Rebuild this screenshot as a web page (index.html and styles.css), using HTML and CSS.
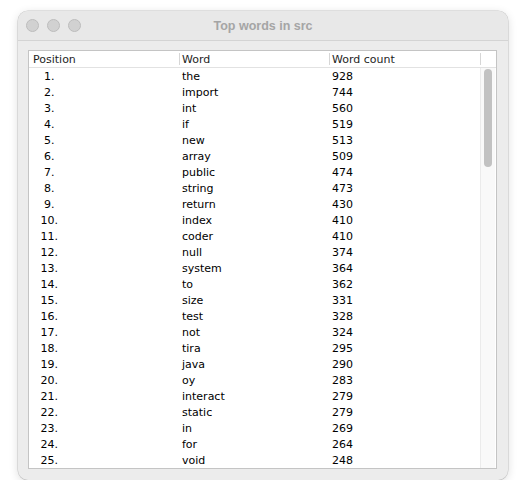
FILE: index.html
```html
<!DOCTYPE html>
<html>
<head>
<meta charset="utf-8">
<link rel="stylesheet" href="styles.css">
</head>
<body>
<div class="window">
  <div class="titlebar">
    <div class="lights"><span class="light"></span><span class="light"></span><span class="light"></span></div>
    <div class="title">Top words in src</div>
    <div></div>
  </div>
  <div class="content">
    <div class="table">
      <div class="header">
        <div class="hcell first">Position</div>
        <div class="hcell">Word</div>
        <div class="hcell">Word count</div>
        <div class="hcell corner"></div>
      </div>
      <div class="bodywrap">
        <div class="rows" id="rows">
          <div class="row"><span class="pos">  1.</span><span class="word">the</span><span class="count">928</span></div>
          <div class="row"><span class="pos">  2.</span><span class="word">import</span><span class="count">744</span></div>
          <div class="row"><span class="pos">  3.</span><span class="word">int</span><span class="count">560</span></div>
          <div class="row"><span class="pos">  4.</span><span class="word">if</span><span class="count">519</span></div>
          <div class="row"><span class="pos">  5.</span><span class="word">new</span><span class="count">513</span></div>
          <div class="row"><span class="pos">  6.</span><span class="word">array</span><span class="count">509</span></div>
          <div class="row"><span class="pos">  7.</span><span class="word">public</span><span class="count">474</span></div>
          <div class="row"><span class="pos">  8.</span><span class="word">string</span><span class="count">473</span></div>
          <div class="row"><span class="pos">  9.</span><span class="word">return</span><span class="count">430</span></div>
          <div class="row"><span class="pos"> 10.</span><span class="word">index</span><span class="count">410</span></div>
          <div class="row"><span class="pos"> 11.</span><span class="word">coder</span><span class="count">410</span></div>
          <div class="row"><span class="pos"> 12.</span><span class="word">null</span><span class="count">374</span></div>
          <div class="row"><span class="pos"> 13.</span><span class="word">system</span><span class="count">364</span></div>
          <div class="row"><span class="pos"> 14.</span><span class="word">to</span><span class="count">362</span></div>
          <div class="row"><span class="pos"> 15.</span><span class="word">size</span><span class="count">331</span></div>
          <div class="row"><span class="pos"> 16.</span><span class="word">test</span><span class="count">328</span></div>
          <div class="row"><span class="pos"> 17.</span><span class="word">not</span><span class="count">324</span></div>
          <div class="row"><span class="pos"> 18.</span><span class="word">tira</span><span class="count">295</span></div>
          <div class="row"><span class="pos"> 19.</span><span class="word">java</span><span class="count">290</span></div>
          <div class="row"><span class="pos"> 20.</span><span class="word">oy</span><span class="count">283</span></div>
          <div class="row"><span class="pos"> 21.</span><span class="word">interact</span><span class="count">279</span></div>
          <div class="row"><span class="pos"> 22.</span><span class="word">static</span><span class="count">279</span></div>
          <div class="row"><span class="pos"> 23.</span><span class="word">in</span><span class="count">269</span></div>
          <div class="row"><span class="pos"> 24.</span><span class="word">for</span><span class="count">264</span></div>
          <div class="row"><span class="pos"> 25.</span><span class="word">void</span><span class="count">248</span></div>
        </div>
        <div class="scrolltrack"><div class="thumb"></div></div>
      </div>
    </div>
  </div>
</div>
</body>
</html>
```
FILE: styles.css
```css
html, body {
  margin: 0;
  padding: 0;
  background: #ffffff;
}
body {
  padding: 11px 0 0 18px;
  font-family: "DejaVu Sans", "Liberation Sans", sans-serif;
}
.window {
  width: 490px;
  height: 469px;
  box-sizing: border-box;
  background: #ececec;
  border-radius: 10px;
  box-shadow: 0 0 0 0.5px rgba(0,0,0,0.18), 0 2px 10px rgba(0,0,0,0.14);
  overflow: hidden;
  display: flex;
  flex-direction: column;
}
.titlebar {
  height: 29px;
  flex: 0 0 29px;
  background: #e8e8e8;
  border-bottom: 1px solid #d4d4d4;
  display: grid;
  grid-template-columns: 1fr auto 1fr;
  align-items: center;
}
.lights {
  display: flex;
  gap: 8px;
  padding-left: 8px;
}
.light {
  width: 11px;
  height: 11px;
  border-radius: 50%;
  background: #d1d1d1;
  border: 0.5px solid #bcbcbc;
}
.title {
  font-family: "Liberation Sans", Arial, sans-serif;
  font-weight: bold;
  font-size: 12.5px;
  color: #a5a5a5;
}
.content {
  padding: 9px 11px 11px 10px;
  flex: 1;
}
.table {
  border: 1px solid #c4c4c4;
  background: #ffffff;
  display: flex;
  flex-direction: column;
}
.header {
  display: grid;
  grid-template-columns: 150px 150px 151px 16px;
  height: 16px;
  border-bottom: 1px solid #e2e2e2;
  font-size: 11px;
  color: #1e1e1e;
}
.hcell {
  position: relative;
  box-sizing: border-box;
  height: 16px;
  padding-top: 2px;
  line-height: 14px;
  padding-left: 3px;
  white-space: nowrap;
}
.hcell.first {
  padding-left: 4px;
}
.hcell:not(.first)::before {
  content: "";
  position: absolute;
  left: 0;
  top: 2px;
  height: 12px;
  border-left: 1px solid #d6d6d6;
}
.bodywrap {
  display: flex;
  height: 400px;
}
.rows {
  width: 451px;
  display: flex;
  flex-direction: column;
}
.row {
  display: grid;
  grid-template-columns: 150px 150px 151px;
  box-sizing: border-box;
  height: 16px;
  padding-top: 2px;
  line-height: 14px;
  font-size: 11px;
  color: #000000;
}
.pos {
  white-space: pre;
  padding-left: 8px;
}
.word, .count {
  padding-left: 3px;
}
.scrolltrack {
  width: 15px;
  background: #f9f9f9;
  border-left: 1px solid #ebebeb;
  padding: 1px 0 0 3px;
  box-sizing: border-box;
}
.thumb {
  width: 8px;
  height: 98px;
  border-radius: 4px;
  background: #c2c2c2;
}
```
